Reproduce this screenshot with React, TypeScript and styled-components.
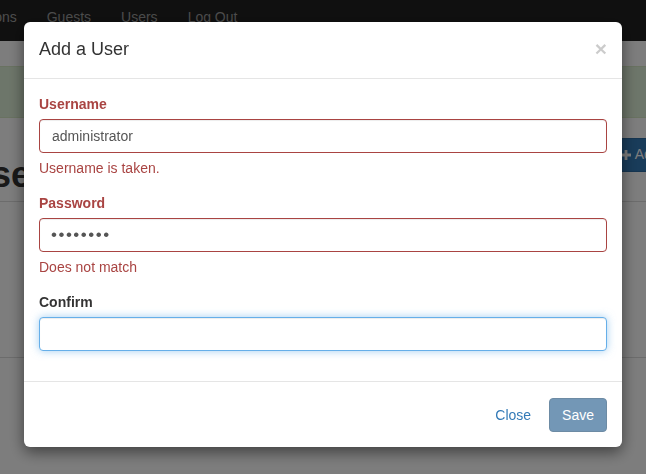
import React from "react";
import styled, {createGlobalStyle} from "styled-components";

const GlobalStyle = createGlobalStyle`
  html, body {
    margin: 0;
    padding: 0;
    overflow: hidden;
  }

  body {
    font-family: "Liberation Sans", Arial, Helvetica, sans-serif;
    font-size: 14px;
    line-height: 1.428571;
    color: #333;
    background: #fff;
  }

  * {
    box-sizing: border-box;
  }
`;

const Navbar = styled.nav`
  height: 41px;
  background: #222;
  overflow: hidden;
`;

const NavList = styled.ul`
  display: flex;
  list-style: none;
  margin: 0 0 0 -80px;
  padding: 0;
`;

const NavItem = styled.li`
  a {
    display: block;
    padding: 7px 15px 14px;
    color: #9d9d9d;
    text-decoration: none;
    line-height: 20px;
  }
`;

const Content = styled.div`
  width: 741px;
  margin-left: -35px;
`;

const Alert = styled.div`
  margin: 25px 0 20px;
  height: 52px;
  background: #dff0d8;
  border: 1px solid #d6e9c6;
  border-radius: 4px;
`;

const PageHeader = styled.div`
  display: flex;
  align-items: flex-start;
  justify-content: space-between;
  height: 64px;
  border-bottom: 1px solid #ddd;
`;

const Title = styled.h1`
  margin: 17px 0 0;
  font-size: 36px;
  font-weight: 700;
  line-height: 40px;
  color: #333;
`;

const AddButton = styled.button`
  display: flex;
  align-items: center;
  gap: 4px;
  height: 34px;
  margin-top: 0;
  padding: 6px 12px;
  font: inherit;
  color: #fff;
  background: #337ab7;
  border: 1px solid #2e6da4;
  border-radius: 4px;
`;

const TableArea = styled.div`
  height: 156px;
  border-bottom: 1px solid #ddd;
`;

const Backdrop = styled.div`
  position: fixed;
  inset: 0;
  background: rgba(0, 0, 0, 0.51);
`;

const Dialog = styled.div`
  position: fixed;
  top: 22px;
  left: 24px;
  width: 598px;
  background: #fff;
  border-radius: 6px;
  box-shadow: 0 5px 15px rgba(0, 0, 0, 0.5);
`;

const ModalHeader = styled.div`
  display: flex;
  justify-content: space-between;
  align-items: flex-start;
  padding: 15px;
  border-bottom: 1px solid #e5e5e5;
`;

const ModalTitle = styled.h4`
  margin: 0;
  font-size: 18px;
  font-weight: 500;
  line-height: 1.428571;
  color: #333;
`;

const CloseX = styled.button`
  margin-top: 1px;
  padding: 0;
  border: 0;
  background: transparent;
  font-family: "Liberation Sans", Arial, sans-serif;
  font-size: 21px;
  font-weight: 700;
  line-height: 1;
  color: #000;
  opacity: 0.2;
`;

const ModalBody = styled.div`
  padding: 15px;
`;

const FormGroup = styled.div`
  margin-bottom: 15px;
`;

const Label = styled.label<{ $error?: boolean }>`
  display: block;
  margin-top: 1px;
  margin-bottom: 4px;
  font-weight: 700;
  color: ${p => (p.$error ? "#a94442" : "#333")};
`;

const Input = styled.input<{ $state?: "error" | "focus" }>`
  display: block;
  width: 100%;
  height: 34px;
  padding: 6px 12px;
  font-family: "Liberation Sans", Arial, sans-serif;
  font-size: 14px;
  color: #555;
  background: #fff;
  outline: none;
  border-radius: 4px;
  border: 1px solid ${p => (p.$state === "error" ? "#a94442" : p.$state === "focus" ? "#66afe9" : "#ccc")};
  box-shadow: inset 0 1px 1px rgba(0, 0, 0, 0.075)
    ${p => (p.$state === "focus" ? ", 0 0 8px rgba(102, 175, 233, 0.6)" : "")};

  &[type="password"] {
    font-size: 17px;
    letter-spacing: 1.5px;
    padding-left: 11px;
  }
`;

const Help = styled.span`
  display: block;
  margin: 6px 0 9px;
  color: #a94442;
`;

const ModalFooter = styled.div`
  display: flex;
  justify-content: flex-end;
  gap: 5px;
  padding: 16px 15px 15px;
  border-top: 1px solid #e5e5e5;
`;

const Button = styled.button<{ $variant: "link" | "primary" }>`
  height: 34px;
  padding: 6px 12px;
  font-family: "Liberation Sans", Arial, sans-serif;
  font-size: 14px;
  line-height: 20px;
  border-radius: 4px;
  border: 1px solid ${p => (p.$variant === "primary" ? "#204d74" : "transparent")};
  background: ${p => (p.$variant === "primary" ? "#286090" : "transparent")};
  color: ${p => (p.$variant === "primary" ? "#fff" : "#337ab7")};
  opacity: ${p => (p.$variant === "primary" ? 0.65 : 1)};
`;

function PlusIcon() {
    return (
        <svg width="10" height="10" viewBox="0 0 10 10">
            <path d="M3.6 0h2.8v3.6H10v2.8H6.4V10H3.6V6.4H0V3.6h3.6z" fill="currentColor"/>
        </svg>
    );
}

const App = () => {
    return (
        <>
            <GlobalStyle/>
            <Navbar>
                <NavList>
                    <NavItem><a href="#">Reservations</a></NavItem>
                    <NavItem><a href="#">Guests</a></NavItem>
                    <NavItem><a href="#">Users</a></NavItem>
                    <NavItem><a href="#">Log Out</a></NavItem>
                </NavList>
            </Navbar>
            <Content>
                <Alert/>
                <PageHeader>
                    <Title>Users</Title>
                    <AddButton><PlusIcon/>Add User</AddButton>
                </PageHeader>
                <TableArea/>
            </Content>

            <Backdrop/>
            <Dialog>
                <ModalHeader>
                    <ModalTitle>Add a User</ModalTitle>
                    <CloseX>×</CloseX>
                </ModalHeader>
                <ModalBody>
                    <FormGroup>
                        <Label $error>Username</Label>
                        <Input $state="error" defaultValue="administrator"/>
                        <Help>Username is taken.</Help>
                    </FormGroup>
                    <FormGroup>
                        <Label $error>Password</Label>
                        <Input $state="error" type="password" defaultValue="password"/>
                        <Help>Does not match</Help>
                    </FormGroup>
                    <FormGroup>
                        <Label>Confirm</Label>
                        <Input $state="focus" type="password"/>
                    </FormGroup>
                </ModalBody>
                <ModalFooter>
                    <Button $variant="link">Close</Button>
                    <Button $variant="primary" disabled>Save</Button>
                </ModalFooter>
            </Dialog>
        </>
    );
};

export default App;
